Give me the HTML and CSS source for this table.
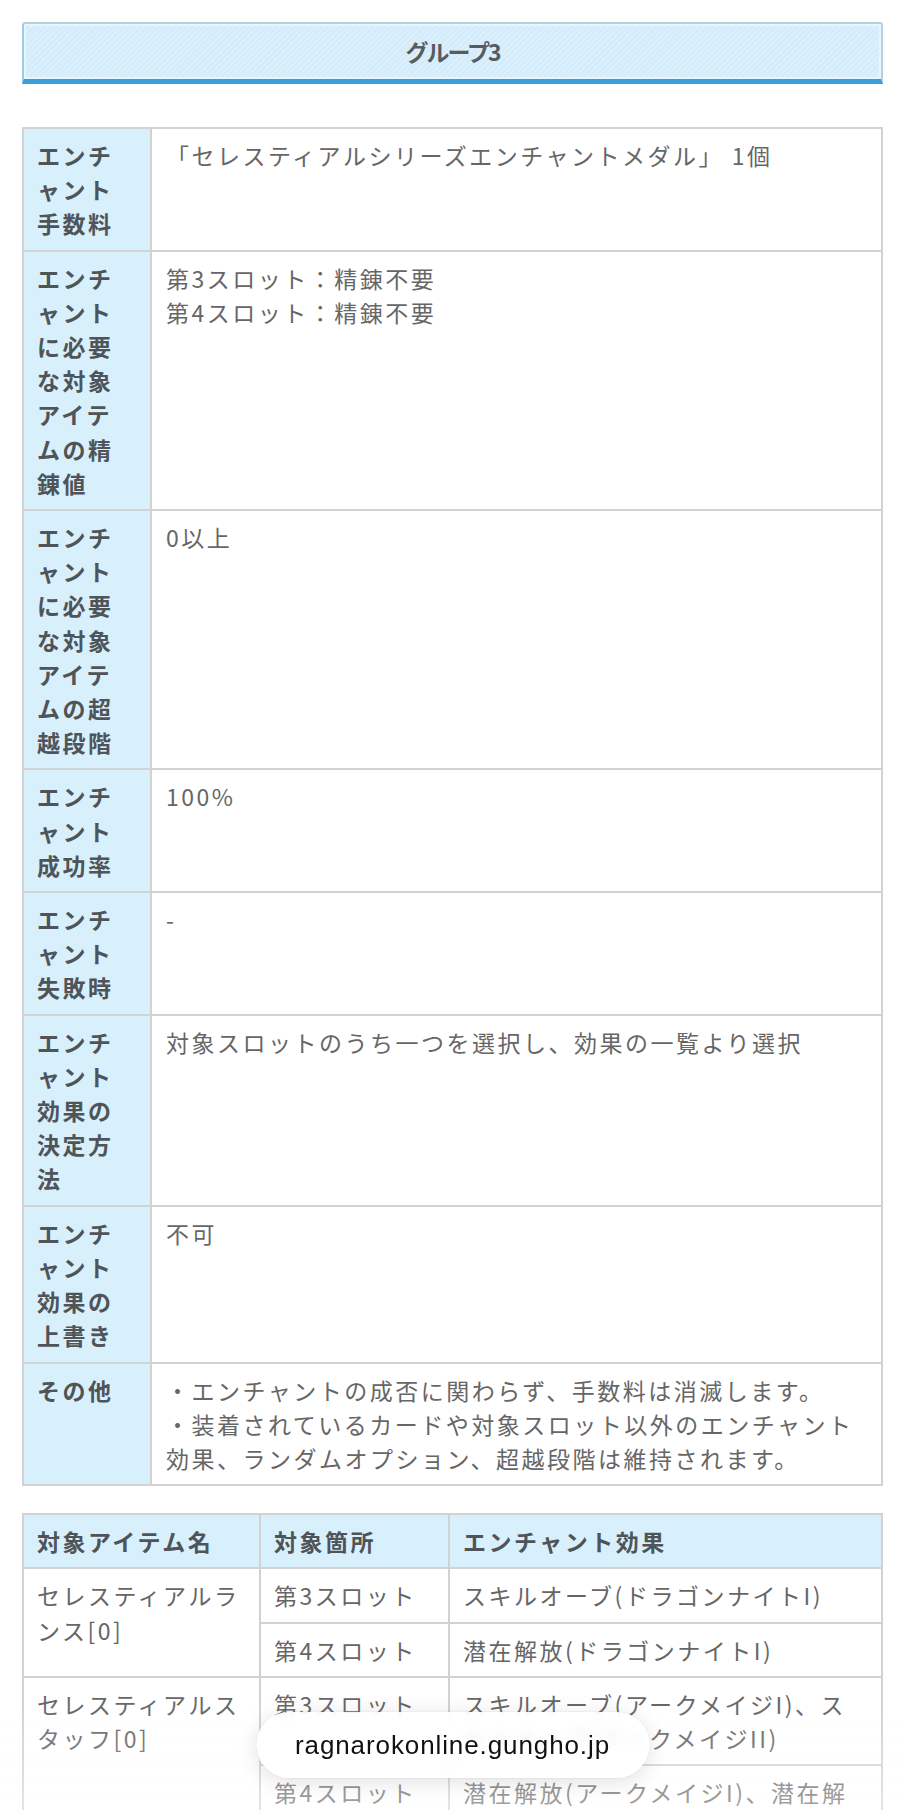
FILE: index.html
```html
<!DOCTYPE html>
<html lang="ja">
<head>
<meta charset="utf-8">
<title>グループ3</title>
<link rel="stylesheet" href="styles.css">
</head>
<body>
<main class="page">
  <h3 class="group-title">グループ3</h3>

  <table class="info-table">
    <tbody>
      <tr><th>エンチャント手数料</th><td>「セレスティアルシリーズエンチャントメダル」 1個</td></tr>
      <tr><th>エンチャントに必要な対象アイテムの精錬値</th><td>第3スロット：精錬不要<br>第4スロット：精錬不要</td></tr>
      <tr><th>エンチャントに必要な対象アイテムの超越段階</th><td>0以上</td></tr>
      <tr><th>エンチャント成功率</th><td>100%</td></tr>
      <tr><th>エンチャント失敗時</th><td>-</td></tr>
      <tr><th>エンチャント効果の決定方法</th><td>対象スロットのうち一つを選択し、効果の一覧より選択</td></tr>
      <tr><th>エンチャント効果の上書き</th><td>不可</td></tr>
      <tr><th>その他</th><td>・エンチャントの成否に関わらず、手数料は消滅します。<br>・装着されているカードや対象スロット以外のエンチャント効果、ランダムオプション、超越段階は維持されます。</td></tr>
    </tbody>
  </table>

  <table class="item-table">
    <thead>
      <tr><th class="c-name">対象アイテム名</th><th class="c-slot">対象箇所</th><th class="c-effect">エンチャント効果</th></tr>
    </thead>
    <tbody>
      <tr><td rowspan="2">セレスティアルランス[0]</td><td>第3スロット</td><td>スキルオーブ(ドラゴンナイトI)</td></tr>
      <tr><td>第4スロット</td><td>潜在解放(ドラゴンナイトI)</td></tr>
      <tr><td rowspan="2">セレスティアルスタッフ[0]</td><td>第3スロット</td><td>スキルオーブ(アークメイジI)、スキルオーブ(アークメイジII)</td></tr>
      <tr><td>第4スロット</td><td>潜在解放(アークメイジI)、潜在解放(アークメイジII)</td></tr>
    </tbody>
  </table>
</main>

<div class="bottom-fade"></div>
<div class="url-pill">ragnarokonline.gungho.jp</div>
</body>
</html>
```

FILE: styles.css
```css
html, body {
  margin: 0;
  padding: 0;
  background: #ffffff;
}

body {
  font-family: "Noto Sans CJK JP", "Noto Sans", sans-serif;
  color: #666666;
}

.page {
  padding: 22px 22px 40px;
}

.group-title {
  margin: 0 0 43px;
  height: 55px;
  line-height: 55px;
  text-align: center;
  font-size: 23px;
  letter-spacing: -2px;
  font-weight: 700;
  color: #575c60;
  background: repeating-linear-gradient(135deg, #d3ebfa 0 2px, #dcf0fc 2px 4px);
  border: 2px solid #b8cfdc;
  border-left-color: #9fcbe8;
  border-bottom: 5px solid #3a9fd9;
  border-radius: 3px 3px 0 0;
  box-shadow: inset 0 0 0 2px #e6f5fe;
}

table {
  width: 100%;
  border-collapse: collapse;
  table-layout: fixed;
  font-size: 23px;
  line-height: 34.2px;
  letter-spacing: 2.5px;
}

th, td {
  border: 2px solid #d2d2d2;
  vertical-align: top;
  text-align: left;
}

th {
  background: #d8effc;
  color: #4f5458;
  font-weight: 700;
  padding: 9px 12px 9px 13px;
  line-break: anywhere;
}

td {
  background: #ffffff;
  color: #666666;
  padding: 9px 15px 9px 14px;
}

.info-table th {
  width: 88px;
  padding-right: 25px;
}

.item-table {
  margin-top: 27px;
}

.item-table th,
.item-table td {
  padding-left: 13px;
  padding-right: 13px;
}

.item-table .c-name { width: 209px; }
.item-table .c-slot { width: 161px; }

.bottom-fade {
  position: fixed;
  left: 0;
  right: 0;
  bottom: 0;
  height: 110px;
  background: linear-gradient(to bottom, rgba(255,255,255,0) 0%, rgba(255,255,255,0.4) 100%);
  pointer-events: none;
}

.url-pill {
  position: fixed;
  left: 50%;
  bottom: 32px;
  transform: translateX(-50%);
  width: 393px;
  height: 66px;
  border-radius: 33px;
  background: rgba(255, 255, 255, 0.86);
  backdrop-filter: blur(6px);
  box-shadow: 0 4px 22px rgba(0, 0, 0, 0.12), 0 0 0 1px rgba(0, 0, 0, 0.03);
  font-family: "Liberation Sans", Arial, sans-serif;
  font-size: 26px;
  letter-spacing: 0.9px;
  color: #111111;
  line-height: 66px;
  text-align: center;
}
```
